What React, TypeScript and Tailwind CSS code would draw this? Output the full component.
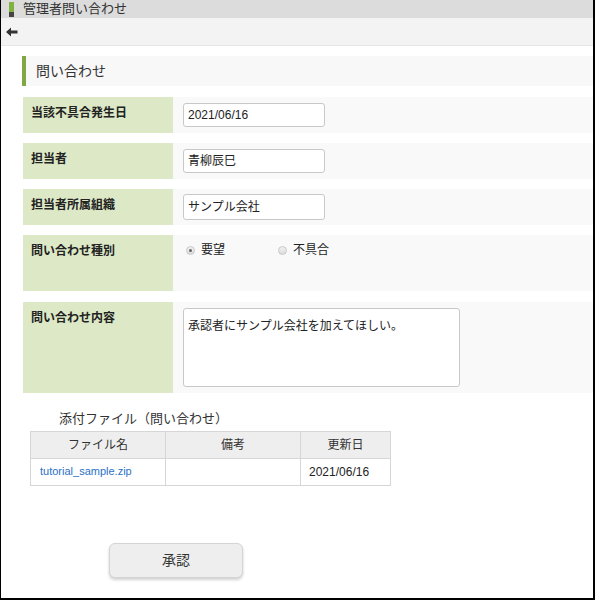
import React from 'react';

const font = { fontFamily: '"Liberation Sans", "Noto Sans CJK JP", sans-serif' };

function Row({ label, h, children }: { label: string; h: string; children: React.ReactNode }) {
  return (
    <div className={`flex ${h}`}>
      <div className="w-[150px] shrink-0 bg-[#dde9c6] pl-[8px] pt-[7px] text-[12px] font-bold text-[#222]">{label}</div>
      <div className="flex-1 bg-[#f9f9f9] pl-[10px]">{children}</div>
    </div>
  );
}

function Radio({ checked, label }: { checked?: boolean; label: string }) {
  return (
    <label className="flex items-center gap-[6px] text-[12px] text-[#222]">
      <span className="grid h-[9px] w-[9px] place-items-center rounded-full border border-[#c8c8c8] bg-gradient-to-b from-[#f2f2f2] to-[#dcdcdc]">
        {checked && <span className="h-[3px] w-[3px] rounded-full bg-[#666]" />}
      </span>
      {label}
    </label>
  );
}

export default function App() {
  return (
    <div style={font} className="flex h-[600px] w-[595px] flex-col overflow-hidden border-b-2 border-l border-r-2 border-black bg-white">
      <div className="flex h-[18px] items-center bg-[#dcdcdc]">
        <div className="ml-[8px] flex h-[15px] w-[5px] flex-col">
          <div className="h-[10px] bg-[#7fb23f]" />
          <div className="flex-1 bg-[#444]" />
        </div>
        <span className="ml-[9px] text-[13px] text-[#333]">管理者問い合わせ</span>
      </div>
      <div className="flex h-[28px] items-center border-b border-[#e6e6e6] bg-[#f3f3f3] pl-[5px]">
        <svg width="12" height="10" viewBox="0 0 12 10">
          <path d="M0 5 L5 0.5 V3.5 H11.5 V6.5 H5 V9.5 Z" fill="#333" />
        </svg>
      </div>

      <div className="ml-[21px] mt-[10px] flex h-[30px] items-center border-l-4 border-[#7fa845] bg-[#f8f8f8] pl-[10px] text-[14px] text-[#333]">
        問い合わせ
      </div>

      <div className="ml-[22px] mt-[11px] flex flex-col gap-[10px]">
        <Row label="当該不具合発生日" h="h-[36px]">
          <div className="pt-[6px]">
            <div className="flex h-[24px] w-[142px] items-center rounded-[3px] border border-[#c8c8c8] bg-white pl-[4px] text-[12px] text-[#222]">2021/06/16</div>
          </div>
        </Row>
        <Row label="担当者" h="h-[36px]">
          <div className="pt-[6px]">
            <div className="flex h-[24px] w-[142px] items-center rounded-[3px] border border-[#c8c8c8] bg-white pl-[4px] text-[12px] text-[#222]">青柳辰巳</div>
          </div>
        </Row>
        <Row label="担当者所属組織" h="h-[36px]">
          <div className="pt-[5px]">
            <div className="flex h-[26px] w-[142px] items-center rounded-[3px] border border-[#c8c8c8] bg-white pl-[4px] text-[12px] text-[#222]">サンプル会社</div>
          </div>
        </Row>
        <Row label="問い合わせ種別" h="h-[56px]">
          <div className="flex gap-[53px] pl-[3px] pt-[6px]">
            <Radio checked label="要望" />
            <Radio label="不具合" />
          </div>
        </Row>
        <div className="mt-[1px]">
          <Row label="問い合わせ内容" h="h-[91px]">
            <div className="pt-[6px]">
              <div className="h-[79px] w-[277px] rounded-[3px] border border-[#c8c8c8] bg-white pl-[4px] pt-[8px] text-[12px] text-[#222]">承認者にサンプル会社を加えてほしい。</div>
            </div>
          </Row>
        </div>
      </div>

      <div className="ml-[58px] mt-[16px] text-[13px] text-[#333]">添付ファイル（問い合わせ）</div>
      <table className="ml-[29px] mt-[2px] w-[361px] border-collapse text-[12px]">
        <thead>
          <tr className="h-[27px] bg-[#eeeeee] text-[#333]">
            <th className="w-[135px] border border-[#d6d6d6] font-normal">ファイル名</th>
            <th className="w-[135px] border border-[#d6d6d6] font-normal">備考</th>
            <th className="border border-[#d6d6d6] font-normal">更新日</th>
          </tr>
        </thead>
        <tbody>
          <tr className="h-[27px]">
            <td className="border border-[#d6d6d6] pl-[9px] text-[11px] text-[#2a72c8]">tutorial_sample.zip</td>
            <td className="border border-[#d6d6d6]" />
            <td className="border border-[#d6d6d6] pl-[8px] text-[#222]">2021/06/16</td>
          </tr>
        </tbody>
      </table>

      <div className="ml-[108px] mt-[57px]">
        <button className="h-[35px] w-[134px] rounded-[6px] border border-[#d4d4d4] bg-[#eeeeee] text-[14px] text-[#333] shadow-[0_2px_3px_rgba(0,0,0,0.18)]">
          承認
        </button>
      </div>
    </div>
  );
}
